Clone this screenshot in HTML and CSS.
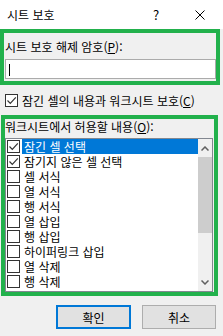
FILE: index.html
```html
<!DOCTYPE html>
<html lang="ko">
  <head>
    <meta charset="UTF-8" />
    <meta name="viewport" content="width=device-width, initial-scale=1.0" />
    <link rel="stylesheet" href="styles.css">
  </head>
  <body>
    <div class="dialog">
      <div class="titlebar">
        <span class="title">시트 보호</span>
        <span class="help">?</span>
        <span class="close">
          <svg width="10" height="10" viewBox="0 0 10 10"><path d="M0.5 0.5 L9.5 9.5 M9.5 0.5 L0.5 9.5" stroke="#000" stroke-width="1" fill="none"/></svg>
        </span>
      </div>

      <div class="frame pw">
        <div class="field-label">시트 보호 해제 암호(<u>P</u>):</div>
        <div class="input"><span class="caret"></span></div>
      </div>

      <div class="protect-row">
        <span class="cb">
          <svg width="11" height="11" viewBox="0 0 11 11"><path d="M1.5 5.5 L4.3 8.3 L9.8 2.3" stroke="#333" stroke-width="1.2" fill="none"/></svg>
        </span>
        <span>잠긴 셀의 내용과 워크시트 보호(<u>C</u>)</span>
      </div>

      <div class="frame perms">
        <div class="field-label">워크시트에서 허용할 내용(<u>O</u>):</div>
        <div class="listbox">
          <ul class="items">
            <li class="selected"><span class="cb"><svg width="11" height="11" viewBox="0 0 11 11"><path d="M1.5 5.5 L4.3 8.3 L9.8 2.3" stroke="#333" stroke-width="1.2" fill="none"/></svg></span><span class="text">잠긴 셀 선택</span></li>
            <li><span class="cb"><svg width="11" height="11" viewBox="0 0 11 11"><path d="M1.5 5.5 L4.3 8.3 L9.8 2.3" stroke="#333" stroke-width="1.2" fill="none"/></svg></span><span class="text">잠기지 않은 셀 선택</span></li>
            <li><span class="cb"></span><span class="text">셀 서식</span></li>
            <li><span class="cb"></span><span class="text">열 서식</span></li>
            <li><span class="cb"></span><span class="text">행 서식</span></li>
            <li><span class="cb"></span><span class="text">열 삽입</span></li>
            <li><span class="cb"></span><span class="text">행 삽입</span></li>
            <li><span class="cb"></span><span class="text">하이퍼링크 삽입</span></li>
            <li><span class="cb"></span><span class="text">열 삭제</span></li>
            <li><span class="cb"></span><span class="text">행 삭제</span></li>
          </ul>
          <div class="scrollbar">
            <div class="arrow">
              <svg width="8" height="5" viewBox="0 0 8 5"><path d="M0.5 4.5 L4 1 L7.5 4.5" stroke="#606060" stroke-width="1.5" fill="none"/></svg>
            </div>
            <div class="thumb"></div>
            <div class="track"></div>
            <div class="arrow">
              <svg width="8" height="5" viewBox="0 0 8 5"><path d="M0.5 0.5 L4 4 L7.5 0.5" stroke="#606060" stroke-width="1.5" fill="none"/></svg>
            </div>
          </div>
        </div>
      </div>

      <div class="buttons">
        <button class="btn default">확인</button>
        <button class="btn">취소</button>
      </div>
    </div>
  </body>
</html>
```

FILE: styles.css
```css
* {
  box-sizing: border-box;
}

body {
  margin: 0;
  background-color: #f0f0f0;
  font-family: "Noto Sans CJK KR", "Liberation Sans", sans-serif;
  font-size: 12px;
  color: #000;
}

.dialog {
  width: 223px;
  height: 336px;
}

.titlebar {
  display: flex;
  align-items: center;
  height: 29px;
  padding-left: 7px;
  background-color: #fff;
}

.title {
  flex: 1;
}

.help {
  width: 12px;
  text-align: center;
  font-size: 13px;
}

.close {
  display: flex;
  margin-left: 33px;
  margin-right: 18px;
}

.frame {
  border: 4px solid #22b14c;
}

.frame.pw {
  width: 220px;
  height: 56px;
  padding: 6px 0 2px 1px;
}

.field-label {
  line-height: 16px;
  white-space: nowrap;
}

.input {
  margin-top: 4px;
  height: 20px;
  background-color: #fff;
  border: 1px solid #ababab;
  padding: 4px 0 0 3px;
}

.caret {
  display: block;
  width: 1px;
  height: 12px;
  background-color: #000;
}

.protect-row {
  display: flex;
  align-items: center;
  height: 30px;
  padding-left: 5px;
  gap: 4px;
  white-space: nowrap;
}

.cb {
  display: flex;
  align-items: center;
  justify-content: center;
  flex: none;
  width: 13px;
  height: 13px;
  border: 1px solid #333;
  background-color: #fff;
}

.frame.perms {
  margin-left: 1px;
  width: 217px;
  height: 181px;
}

.listbox {
  display: flex;
  margin-top: 3px;
  width: 208px;
  height: 154px;
  border: 1px solid #828790;
  background-color: #fff;
}

.items {
  flex: 1;
  list-style: none;
  margin: 0;
  padding: 0 0 0 1px;
}

.items li {
  display: flex;
  align-items: center;
  height: 15px;
  white-space: nowrap;
}

.items .text {
  display: block;
  flex: 1;
  height: 15px;
  overflow: hidden;
  margin-left: 2px;
  padding-left: 2px;
  line-height: 15px;
}

.items li.selected .text {
  background-color: #0078d7;
  color: #fff;
}

.scrollbar {
  display: flex;
  flex-direction: column;
  width: 14px;
  background-color: #f0f0f0;
}

.arrow {
  display: flex;
  align-items: center;
  justify-content: center;
  height: 18px;
}

.thumb {
  height: 76px;
  background-color: #cdcdcd;
}

.track {
  flex: 1;
}

.buttons {
  display: flex;
  justify-content: flex-end;
  gap: 11px;
  padding: 9px 7px 0 0;
}

.btn {
  width: 74px;
  height: 24px;
  padding: 0;
  font-family: inherit;
  font-size: 12px;
  background-color: #e1e1e1;
  border: 1px solid #adadad;
}

.btn.default {
  width: 75px;
  border: 2px solid #0078d7;
}
```
